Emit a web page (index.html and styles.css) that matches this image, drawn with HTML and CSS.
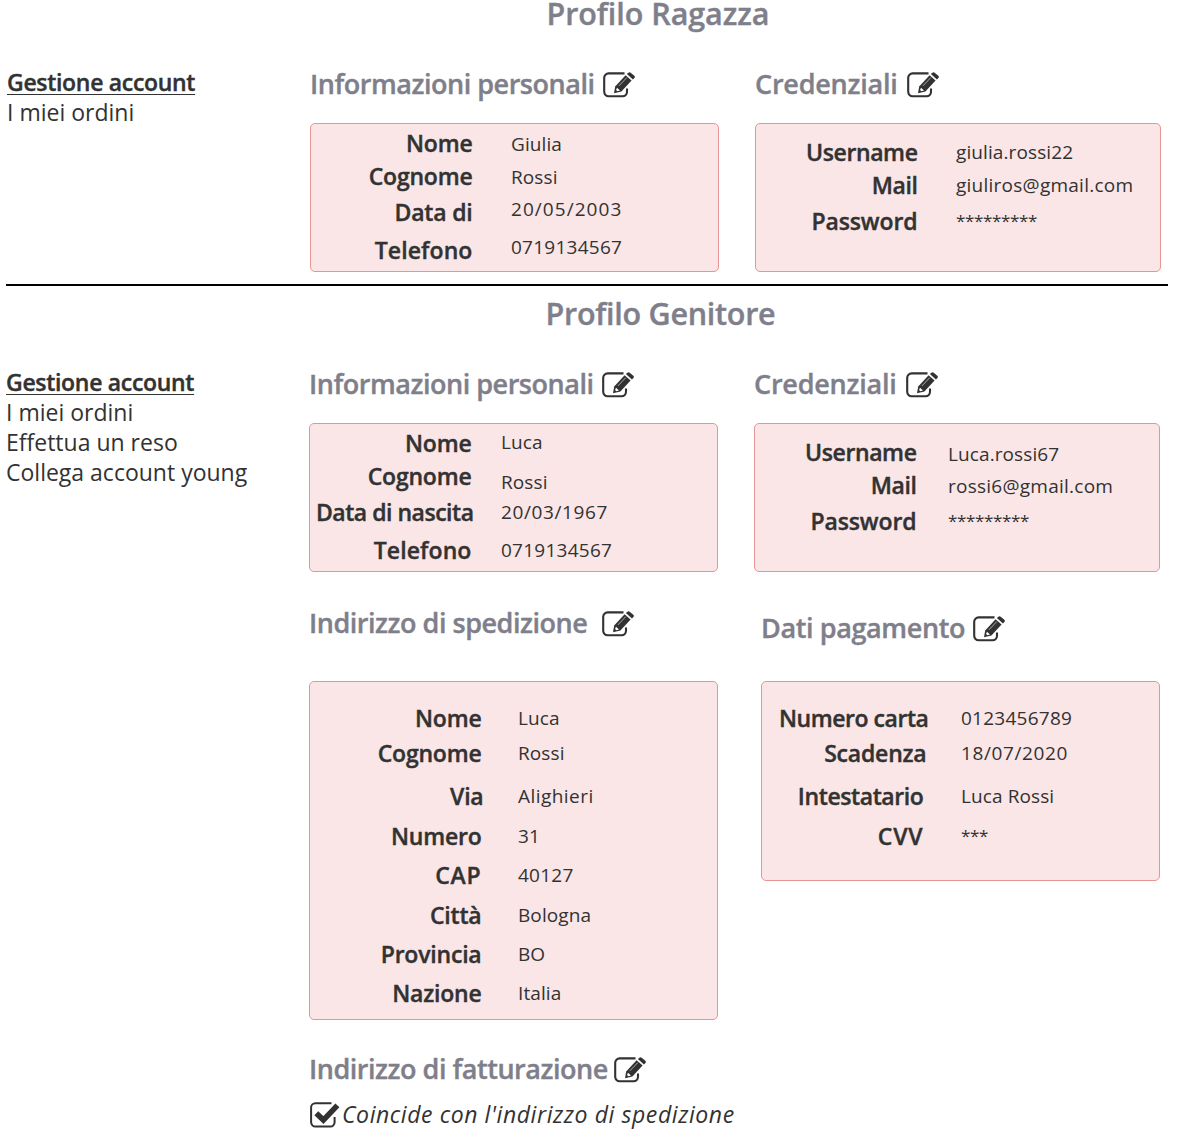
FILE: index.html
```html
<!DOCTYPE html>
<html lang="it">
<head>
<meta charset="utf-8">
<title>Profilo</title>
<link rel="stylesheet" href="styles.css">
</head>
<body>
<svg class="defs" aria-hidden="true">
  <symbol id="edit" viewBox="0 0 32 26">
    <path d="M21.5 1.4H5.6A4.4 4.4 0 0 0 1.2 5.8v14a4.4 4.4 0 0 0 4.4 4.4h14a4.4 4.4 0 0 0 4.4-4.4v-3.2" fill="none" stroke="#323232" stroke-width="2.1"/>
    <path d="M22.6 3.3 28.6 8.6 18.4 19.4 11 21.2 12.2 14.4Z" fill="#323232"/>
    <path d="M23.9 2 25.4.7q1.1-1 2.3 0l3.6 3.1q1.1 1.1.1 2.3L29.9 7.5Z" fill="#323232"/>
    <path d="m14 15.7 3 2.7-2.7.8-1.2-1.1Z" fill="#fff"/>
    <path d="m15.9 13.9 7.9-8.3" stroke="#fff" stroke-width=".6"/>
  </symbol>
  <symbol id="check" viewBox="0 0 30 26">
    <path d="M21.5 1.2H5.4A4.3 4.3 0 0 0 1.1 5.5v14.8a4.3 4.3 0 0 0 4.3 4.3h14.9a4.3 4.3 0 0 0 4.3-4.3V15" fill="none" stroke="#323232" stroke-width="2"/>
    <path d="m6.3 11.3 7.1 6.8L27.4 3.4" fill="none" stroke="#323232" stroke-width="5.6"/>
  </symbol>
</svg>

<section class="profile young">
  <h1>Profilo Ragazza</h1>
  <div class="columns">
    <nav>
      <a class="current">Gestione account</a>
      <a>I miei ordini</a>
    </nav>
    <div class="block">
      <h2>Informazioni personali<svg class="edit"><use href="#edit"/></svg></h2>
      <div class="card info">
        <ul class="labels"><li>Nome</li><li>Cognome</li><li>Data di</li><li class="wide">Telefono</li></ul>
        <ul class="values"><li>Giulia</li><li>Rossi</li><li class="date">20/05/2003</li><li class="num">0719134567</li></ul>
      </div>
    </div>
    <div class="block">
      <h2 class="short">Credenziali<svg class="edit"><use href="#edit"/></svg></h2>
      <div class="card login">
        <ul class="labels"><li>Username</li><li>Mail</li><li class="secret">Password</li></ul>
        <ul class="values"><li>giulia.rossi22</li><li class="mail">giuliros@gmail.com</li><li class="mask">*********</li></ul>
      </div>
    </div>
  </div>
</section>

<section class="profile parent">
  <h1>Profilo Genitore</h1>
  <div class="columns">
    <nav>
      <a class="current">Gestione account</a>
      <a>I miei ordini</a>
      <a>Effettua un reso</a>
      <a>Collega account young</a>
    </nav>
    <div class="block">
      <h2>Informazioni personali<svg class="edit"><use href="#edit"/></svg></h2>
      <div class="card info">
        <ul class="labels"><li>Nome</li><li>Cognome</li><li class="birth">Data di nascita</li><li class="wide">Telefono</li></ul>
        <ul class="values"><li>Luca</li><li>Rossi</li><li class="date short-date">20/03/1967</li><li class="num">0719134567</li></ul>
      </div>
      <h2 class="second shipping">Indirizzo di spedizione<svg class="edit"><use href="#edit"/></svg></h2>
      <div class="card address">
        <ul class="labels"><li>Nome</li><li>Cognome</li><li class="via">Via</li><li>Numero</li><li class="caps">CAP</li><li>Città</li><li>Provincia</li><li>Nazione</li></ul>
        <ul class="values"><li>Luca</li><li>Rossi</li><li class="street">Alighieri</li><li>31</li><li class="num">40127</li><li>Bologna</li><li>BO</li><li>Italia</li></ul>
      </div>
      <h2 class="billing">Indirizzo di fatturazione<svg class="edit"><use href="#edit"/></svg></h2>
      <p class="same"><svg class="check"><use href="#check"/></svg><em>Coincide con l'indirizzo di spedizione</em></p>
    </div>
    <div class="block">
      <h2 class="short">Credenziali<svg class="edit"><use href="#edit"/></svg></h2>
      <div class="card login">
        <ul class="labels"><li>Username</li><li>Mail</li><li class="secret">Password</li></ul>
        <ul class="values"><li>Luca.rossi67</li><li class="mail">rossi6@gmail.com</li><li class="mask">*********</li></ul>
      </div>
      <div class="payment">
        <h2>Dati pagamento<svg class="edit"><use href="#edit"/></svg></h2>
        <div class="card money">
          <ul class="labels"><li class="number">Numero carta</li><li class="expiry">Scadenza</li><li class="holder">Intestatario</li><li class="caps">CVV</li></ul>
          <ul class="values"><li class="num">0123456789</li><li class="date short-date">18/07/2020</li><li>Luca Rossi</li><li class="mask">***</li></ul>
        </div>
      </div>
    </div>
  </div>
</section>
</body>
</html>
```
FILE: styles.css
```css
* { box-sizing: border-box; }
body {
  margin: 0;
  width: 1178px;
  height: 1135px;
  overflow: hidden;
  background: #fff;
  color: #323232;
  font-family: "Open Sans", "Noto Sans", sans-serif;
}
h1, h2, ul, li, p { margin: 0; padding: 0; }
ul { list-style: none; }
.defs { display: none; }

.profile { margin: 0 10px 0 6px; }
.young { height: 286px; border-bottom: 2px solid #000; }
.parent { padding-top: 14px; margin-left: 5px; }

h1 {
  height: 30px;
  margin-bottom: 37px;
  padding-left: 142px;
  text-align: center;
  color: #7f7f8b;
  font-size: 30.5px;
  font-weight: 600;
  letter-spacing: -.05px;
  line-height: 27px;
  white-space: nowrap;
}
.parent h1 { padding-left: 148px; letter-spacing: -.27px; }
h1, h2, .current, .labels { -webkit-text-stroke: .4px currentColor; }
.columns {
  display: grid;
  grid-template-columns: 304px 445px 406px;
}
nav { display: flex; flex-direction: column; align-items: flex-start; padding-left: 1px; }
nav a { font-size: 23px; line-height: 30px; white-space: nowrap; }
nav .current { font-weight: 600; letter-spacing: -.31px; text-decoration: underline; text-decoration-thickness: 1px; text-underline-offset: 3px; }

h2 {
  display: flex;
  align-items: center;
  gap: 8px;
  height: 30px;
  margin-top: 2px;
  margin-bottom: 24px;
  color: #7f7f8b;
  font-size: 27px;
  font-weight: 600;
  letter-spacing: -.47px;
  line-height: 30px;
  white-space: nowrap;
}
.short { gap: 9px; letter-spacing: -.22px; }
.edit { width: 32px; height: 26px; flex: none; margin-top: 2px; }
.check { width: 30px; height: 26px; flex: none; margin-top: 1px; }

.card {
  display: flex;
  width: 409px;
  height: 149px;
  border: 1px solid #e99494;
  border-radius: 5px;
  background: #fae6e6;
}
.card ul { display: grid; align-content: start; line-height: 30px; white-space: nowrap; }
.labels { width: 161.5px; text-align: right; justify-items: end; font-size: 23px; font-weight: 600; letter-spacing: -.2px; }
.values { font-size: 19px; letter-spacing: .1px; }
.card li { height: 30px; }
.values .date { letter-spacing: 1.05px; }
.values .short-date { letter-spacing: .6px; }
.num { letter-spacing: .25px; }
.mail { letter-spacing: .25px; }
.street { letter-spacing: .45px; }
.wide { letter-spacing: .1px; }
.values .mask { font-size: 17px; letter-spacing: -.35px; }

.info .labels { padding-top: 4px; grid-template-rows: 33px 36px 38px 30px; }
.info .values { padding: 5px 0 0 38.5px; grid-template-rows: 33px 32px 38px 30px; }
.parent .info .values { padding: 3px 0 0 29.5px; grid-template-rows: 40px 30px 38px 30px; }
.birth { margin-right: -2px; letter-spacing: -.48px; }

.login { width: 406px; }
.login .labels { padding-top: 13px; letter-spacing: -.4px; grid-template-rows: 33px 36px 30px; }
.login .secret { letter-spacing: -.1px; }
.login .values { padding: 13px 0 0 38.5px; grid-template-rows: 33px 36px 30px; }
.parent .login .values { padding: 15px 0 0 31.5px; grid-template-rows: 32px 35px 30px; }

.second { margin: 36px 0 43px; }
.shipping { gap: 15px; }
.address { height: 339px; }
.address .labels { width: 171.5px; padding-top: 21px; grid-template-rows: 35px 43px 40px 39px 40px 39px 39px 30px; }
.address .values { padding: 21px 0 0 36.5px; grid-template-rows: 35px 43px 40px 39px 40px 39px 39px 30px; }
.via { margin-right: -2px; }
.caps { letter-spacing: .8px; }

.billing { gap: 6px; margin: 34px 0 15px; }
.same { display: flex; align-items: center; gap: 2px; height: 30px; padding-left: 1px; font-size: 23px; letter-spacing: .58px; line-height: 30px; white-space: nowrap; }

.payment { margin: 41px 0 0 7px; }
.payment h2 { gap: 8px; margin-bottom: 38px; letter-spacing: -.38px; }
.money { width: 399px; height: 200px; }
.money .labels { padding-top: 21px; grid-template-rows: 35px 43px 40px 30px; }
.money .values { padding: 21px 0 0 37.5px; grid-template-rows: 35px 43px 40px 30px; }
.number { margin-right: -5px; letter-spacing: -.45px; }
.expiry { margin-right: -3px; }
.holder { letter-spacing: -.4px; }
```
